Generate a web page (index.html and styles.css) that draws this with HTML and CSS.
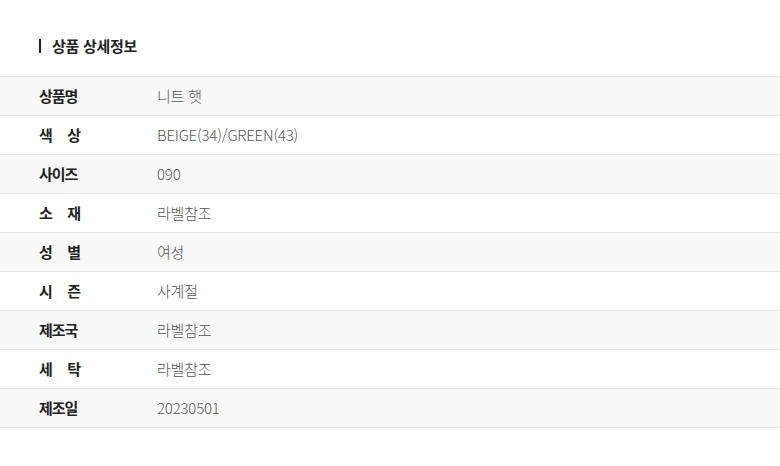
FILE: index.html
```html
<!DOCTYPE html>
<html lang="ko">
<head>
<meta charset="utf-8">
<link rel="stylesheet" href="styles.css">
</head>
<body>
<section class="detail">
  <h2 class="title">상품 상세정보</h2>
  <div class="table">
    <div class="row odd"><div class="label"><span>상품명</span></div><div class="value">니트 햇</div></div>
    <div class="row"><div class="label"><span>색</span><span>상</span></div><div class="value">BEIGE(34)/GREEN(43)</div></div>
    <div class="row odd"><div class="label"><span>사이즈</span></div><div class="value">090</div></div>
    <div class="row"><div class="label"><span>소</span><span>재</span></div><div class="value">라벨참조</div></div>
    <div class="row odd"><div class="label"><span>성</span><span>별</span></div><div class="value">여성</div></div>
    <div class="row"><div class="label"><span>시</span><span>즌</span></div><div class="value">사계절</div></div>
    <div class="row odd"><div class="label"><span>제조국</span></div><div class="value">라벨참조</div></div>
    <div class="row"><div class="label"><span>세</span><span>탁</span></div><div class="value">라벨참조</div></div>
    <div class="row odd"><div class="label"><span>제조일</span></div><div class="value">20230501</div></div>
  </div>
</section>
</body>
</html>
```
FILE: styles.css
```css
* { box-sizing: border-box; }
html, body { margin: 0; padding: 0; background: #fff; }
body {
  font-family: "Noto Sans CJK KR", "Noto Sans", sans-serif;
  color: #222;
}
.detail { padding-top: 39px; }
.title {
  margin: 0 0 23px 39px;
  padding-left: 11px;
  border-left: 2px solid #222;
  font-size: 15px;
  font-weight: 700;
  line-height: 14px;
  height: 14px;
  letter-spacing: -0.3px;
}
.table { border-bottom: 1px solid #e3e3e3; }
.row {
  display: grid;
  grid-template-columns: 41px 1fr;
  column-gap: 77px;
  align-items: center;
  height: 39px;
  border-top: 1px solid #e3e3e3;
  padding-left: 39px;
}
.row.odd { background: #f9f9f9; }
.label {
  display: flex;
  justify-content: space-between;
  white-space: nowrap;
  font-size: 15px;
  line-height: 20px;
  font-weight: 700;
  color: #222;
  letter-spacing: -1px;
}
.value {
  font-size: 15px;
  line-height: 20px;
  font-weight: 300;
  color: #555;
  letter-spacing: -0.2px;
}
```
